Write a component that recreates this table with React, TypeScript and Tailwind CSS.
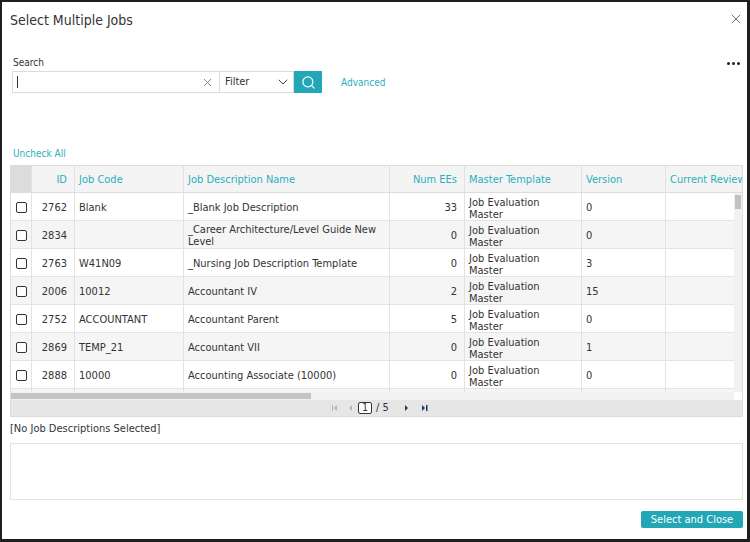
import { Search, X, ChevronDown } from "lucide-react";

const rows = [
  { id: "2762", code: "Blank", name: "_Blank Job Description", ees: "33", ver: "0" },
  { id: "2834", code: "", name: "_Career Architecture/Level Guide New Level", ees: "0", ver: "0" },
  { id: "2763", code: "W41N09", name: "_Nursing Job Description Template", ees: "0", ver: "3" },
  { id: "2006", code: "10012", name: "Accountant IV", ees: "2", ver: "15" },
  { id: "2752", code: "ACCOUNTANT", name: "Accountant Parent", ees: "5", ver: "0" },
  { id: "2869", code: "TEMP_21", name: "Accountant VII", ees: "0", ver: "1" },
  { id: "2888", code: "10000", name: "Accounting Associate (10000)", ees: "0", ver: "0" },
  { id: "", code: "", name: "", ees: "", ver: "" },
];

const Checkbox = () => (
  <div className="w-[11px] h-[11px] border border-[#333] rounded-[2px] bg-white" />
);

const App = () => {
  return (
    <div className="w-[750px] h-[542px] bg-white border-l-2 border-t-2 border-r-[3px] border-b-[3px] border-[#1e1e1e] pl-[8px] pr-[5px] font-['DejaVu_Sans_Condensed','Open_Sans',sans-serif] text-[#333] overflow-hidden">
      {/* header */}
      <div className="flex justify-between items-start pt-[10px] h-[26px]">
        <h1 className="text-[14px] leading-[16px] text-[#333]">Select Multiple Jobs</h1>
        <X className="w-[16px] h-[16px] text-[#666] -mt-[1px] -mr-[2px]" strokeWidth={1.4} />
      </div>

      {/* search */}
      <div className="flex justify-between items-center mt-[29px] h-[12px]">
        <span className="text-[10px] leading-[12px] pl-[3px]">Search</span>
        <div className="flex gap-[2px] mr-[2px]">
          <span className="w-[3px] h-[3px] rounded-full bg-[#222]" />
          <span className="w-[3px] h-[3px] rounded-full bg-[#222]" />
          <span className="w-[3px] h-[3px] rounded-full bg-[#222]" />
        </div>
      </div>
      <div className="flex items-center mt-[2px] pl-[2px]">
        <div className="w-[208px] h-[22px] border border-[#dcdcdc] flex items-center justify-between pl-[4px] pr-[5px]">
          <span className="w-[1px] h-[12px] bg-[#333]" />
          <X className="w-[13px] h-[13px] text-[#777]" strokeWidth={1.6} />
        </div>
        <div className="w-[74px] h-[22px] border border-l-0 border-[#dcdcdc] flex items-center justify-between pl-[5px] pr-[2px]">
          <span className="text-[11px] pt-[1px]">Filter</span>
          <ChevronDown className="w-[16px] h-[16px] text-[#444]" strokeWidth={1.5} />
        </div>
        <button className="w-[28px] h-[22px] bg-[#22a7b6] flex items-center justify-center">
          <Search className="w-[15px] h-[15px] text-white" strokeWidth={2} />
        </button>
        <span className="ml-[19px] text-[10px] pt-[1px] text-[#2aaebf]">Advanced</span>
      </div>

      <div className="mt-[55px] text-[10px] leading-[12px] text-[#2aaebf] pl-[3px]">Uncheck All</div>

      {/* grid */}
      <div className="mt-[5px] w-[733px] border border-[#dcdcdc]">
        <div className="flex h-[27px] bg-[#f4f4f4] border-b border-[#dcdcdc] overflow-hidden text-[11px] text-[#2aaebf]">
          <div className="w-[20px] shrink-0 bg-[#dcdcdc]" />
          <div className="w-[43px] shrink-0 border-l border-[#e2e2e2] flex items-center justify-end pt-[2px] pr-[7px]">ID</div>
          <div className="w-[109px] shrink-0 border-l border-[#e2e2e2] flex items-center pt-[2px] pl-[4px]">Job Code</div>
          <div className="w-[206px] shrink-0 border-l border-[#e2e2e2] flex items-center pt-[2px] pl-[4px]">Job Description Name</div>
          <div className="w-[75px] shrink-0 border-l border-[#e2e2e2] flex items-center justify-end pt-[2px] pr-[7px]">Num EEs</div>
          <div className="w-[117px] shrink-0 border-l border-[#e2e2e2] flex items-center pt-[2px] pl-[4px]">Master Template</div>
          <div className="w-[84px] shrink-0 border-l border-[#e2e2e2] flex items-center pt-[2px] pl-[4px]">Version</div>
          <div className="w-[100px] shrink-0 border-l border-[#e2e2e2] flex items-center pt-[2px] pl-[4px] whitespace-nowrap">Current Review</div>
        </div>
        <div className="flex h-[199px]">
          <div className="w-[723px] overflow-hidden text-[11px] leading-[12px]">
            {rows.map((r, i) => (
              <div
                key={i}
                className={`flex h-[28px] shrink-0 border-b border-[#e4e4e4] ${i % 2 === 1 ? "bg-[#f5f5f5]" : "bg-white"}`}
              >
                <div className="w-[20px] shrink-0 flex items-center justify-center pt-[2px]">
                  <Checkbox />
                </div>
                <div className="w-[43px] shrink-0 border-l border-[#e2e2e2] flex items-center justify-end pt-[3px] pr-[7px]">{r.id}</div>
                <div className="w-[109px] shrink-0 border-l border-[#e2e2e2] flex items-center pt-[3px] pl-[4px]">{r.code}</div>
                <div className="w-[206px] shrink-0 border-l border-[#e2e2e2] flex items-center pt-[3px] pl-[4px] pr-[4px]">{r.name}</div>
                <div className="w-[75px] shrink-0 border-l border-[#e2e2e2] flex items-center justify-end pt-[3px] pr-[7px]">{r.ees}</div>
                <div className="w-[117px] shrink-0 border-l border-[#e2e2e2] pt-[4px] pl-[4px]">
                  Job Evaluation
                  <br />
                  Master
                </div>
                <div className="w-[84px] shrink-0 border-l border-[#e2e2e2] flex items-center pt-[3px] pl-[4px]">{r.ver}</div>
                <div className="w-[100px] shrink-0 border-l border-[#e2e2e2]" />
              </div>
            ))}
          </div>
          <div className="w-[8px] bg-[#f1f1f1]">
            <div className="h-[14px] mt-[2px] mx-[1px] bg-[#c1c1c1]" />
          </div>
        </div>
        <div className="flex h-[8px]">
          <div className="w-[723px] bg-[#f1f1f1] py-[1px]">
            <div className="w-[300px] h-full bg-[#c4c4c4]" />
          </div>
          <div className="w-[8px] bg-white" />
        </div>
        <div className="h-[16px] bg-[#e6e6e6] flex items-center pl-[321px] text-[11px]">
          <svg width="6" height="6" viewBox="0 0 6 6">
            <rect x="0" y="0" width="1" height="6" fill="#b5b5b5" />
            <path d="M5 0 L2 3 L5 6 Z" fill="#b5b5b5" />
          </svg>
          <svg width="4" height="6" viewBox="0 0 4 6" className="ml-[10px]">
            <path d="M4 0 L1 3 L4 6 Z" fill="#b5b5b5" />
          </svg>
          <div className="ml-[6px] w-[14px] h-[12px] border border-[#333] rounded-[2px] bg-white flex items-center justify-center text-[10px] leading-[10px]">1</div>
          <span className="ml-[4px] text-[11px] whitespace-nowrap">/ 5</span>
          <svg width="4" height="6" viewBox="0 0 4 6" className="ml-[16px]">
            <path d="M0 0 L3 3 L0 6 Z" fill="#1d3a5c" />
          </svg>
          <svg width="6" height="6" viewBox="0 0 6 6" className="ml-[13px]">
            <path d="M0 0 L3 3 L0 6 Z" fill="#1d3a5c" />
            <rect x="4" y="0" width="1.5" height="6" fill="#1d3a5c" />
          </svg>
        </div>
      </div>

      <div className="mt-[5px] text-[11px] leading-[13px]">[No Job Descriptions Selected]</div>
      <div className="mt-[8px] w-[733px] h-[57px] border border-[#e2e2e2]" />
      <div className="flex justify-end w-[733px] mt-[11px]">
        <button className="w-[102px] h-[17px] bg-[#22a7b6] rounded-[2px] text-white text-[11px] leading-[17px]">
          Select and Close
        </button>
      </div>
    </div>
  );
};

export default App;
